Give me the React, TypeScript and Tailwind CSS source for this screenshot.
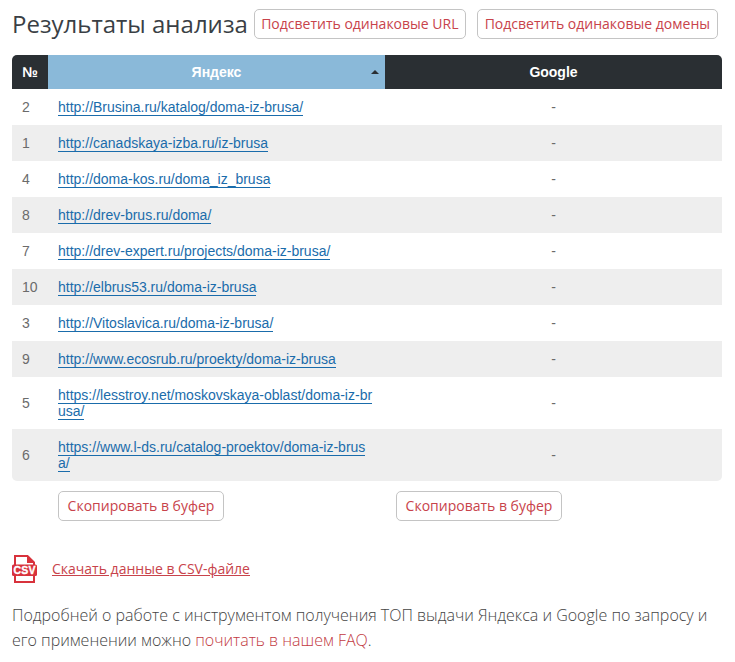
const rows = [
  { n: 2, url: "http://Brusina.ru/katalog/doma-iz-brusa/" },
  { n: 1, url: "http://canadskaya-izba.ru/iz-brusa" },
  { n: 4, url: "http://doma-kos.ru/doma_iz_brusa" },
  { n: 8, url: "http://drev-brus.ru/doma/" },
  { n: 7, url: "http://drev-expert.ru/projects/doma-iz-brusa/" },
  { n: 10, url: "http://elbrus53.ru/doma-iz-brusa" },
  { n: 3, url: "http://Vitoslavica.ru/doma-iz-brusa/" },
  { n: 9, url: "http://www.ecosrub.ru/proekty/doma-iz-brusa" },
  { n: 5, url: "https://lesstroy.net/moskovskaya-oblast/doma-iz-brusa/" },
  { n: 6, url: "https://www.l-ds.ru/catalog-proektov/doma-iz-brusa/" },
];

function OutlineButton({ label, width }: { label: string; width: string }) {
  return (
    <button className={`h-[30px] shrink-0 rounded-[5px] border border-[#c4c4c4] bg-white text-[14px] leading-none text-[#c8434b] whitespace-nowrap ${width}`}>
      {label}
    </button>
  );
}

function CsvIcon() {
  return (
    <svg width="25" height="28" viewBox="0 0 25 28" className="shrink-0">
      <path d="M3 11V1h12.5L22 7.5V11" fill="none" stroke="#d8323c" strokeWidth="2" />
      <path d="M15 0.5v7.5h7.5z" fill="#d8323c" />
      <path d="M3 20v7h19v-7" fill="none" stroke="#d8323c" strokeWidth="2" />
      <rect x="0" y="9.5" width="25" height="11.5" rx="1.5" fill="#d8323c" />
      <text x="12.5" y="19" textAnchor="middle" fontFamily="'Liberation Sans', sans-serif" fontWeight="700" fontSize="10.5" letterSpacing="0.2" stroke="#ffffff" strokeWidth="0.35" fill="#ffffff">
        CSV
      </text>
    </svg>
  );
}

export default function App() {
  return (
    <div className="min-h-screen bg-white px-3 pt-[9px] font-['Open_Sans',sans-serif] w-[735px] h-[662px] overflow-hidden">
      <div className="flex items-center h-[30px]">
        <h1 className="text-[24px] leading-[30px] text-[#3a3f45] mr-[6px] whitespace-nowrap">Результаты анализа</h1>
        <OutlineButton label="Подсветить одинаковые URL" width="w-[212px]" />
        <div className="w-[11px]" />
        <OutlineButton label="Подсветить одинаковые домены" width="w-[241px]" />
      </div>

      <div className="mt-4 w-[710px] font-['Liberation_Sans',Arial,sans-serif] text-[14px]">
        <div className="flex h-[34px] items-center font-bold text-white text-center overflow-hidden rounded-t-[5px] bg-[#2a2f33]">
          <div className="w-[36px]">№</div>
          <div className="relative flex h-full w-[337px] items-center justify-center bg-[#8ab9d9]">
            Яндекс
            <span className="absolute right-[6px] top-[15px] h-0 w-0 border-x-[4px] border-b-[4px] border-x-transparent border-b-[#2a2f33]" />
          </div>
          <div className="w-[337px]">Google</div>
        </div>
        <div className="overflow-hidden rounded-b-[5px]">
          {rows.map((r, i) => (
            <div key={r.n} className={`flex items-center ${i % 2 === 1 ? "bg-[#eeeeee]" : "bg-white"}`}>
              <div className="w-[36px] pl-[10px] text-[#6b6b6b]">{r.n}</div>
              <div className="w-[337px] px-[10px] py-[10px] leading-4 break-all">
                <a href="#" className="border-b border-[#1a6cab] text-[#1a6cab]">
                  {r.url}
                </a>
              </div>
              <div className="w-[337px] text-center text-[#6b6b6b]">-</div>
            </div>
          ))}
        </div>
      </div>

      <div className="mt-[10px] flex">
        <div className="w-[384px] pl-[46px]">
          <OutlineButton label="Скопировать в буфер" width="w-[166px]" />
        </div>
        <OutlineButton label="Скопировать в буфер" width="w-[166px]" />
      </div>

      <div className="mt-[34px] flex items-center">
        <CsvIcon />
        <a href="#" className="ml-[15px] -mt-[2px] text-[14px] text-[#c8434b] underline">
          Скачать данные в CSV-файле
        </a>
      </div>

      <p className="mt-[20px] text-[16px] font-light leading-[25px] text-[#444444]">
        Подробней о работе с инструментом получения ТОП выдачи Яндекса и Google по запросу и его применении можно{" "}
        <a href="#" className="text-[#c23a42]">почитать в нашем FAQ</a>.
      </p>
    </div>
  );
}
